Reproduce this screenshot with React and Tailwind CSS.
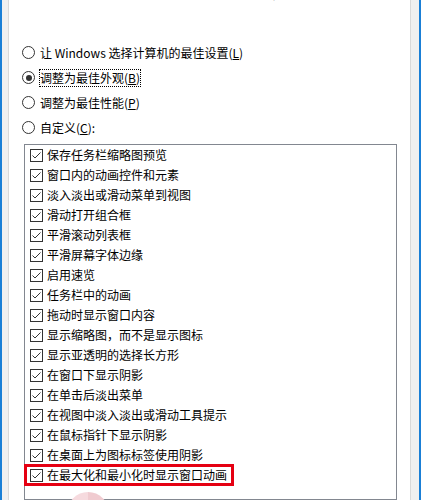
import React from 'react';

const radios = [
  { label: '让 Windows 选择计算机的最佳设置(', key: 'L', checked: false },
  { label: '调整为最佳外观(', key: 'B', checked: true },
  { label: '调整为最佳性能(', key: 'P', checked: false },
  { label: '自定义(', key: 'C', checked: false, colon: true },
];

const effects = [
  '保存任务栏缩略图预览',
  '窗口内的动画控件和元素',
  '淡入淡出或滑动菜单到视图',
  '滑动打开组合框',
  '平滑滚动列表框',
  '平滑屏幕字体边缘',
  '启用速览',
  '任务栏中的动画',
  '拖动时显示窗口内容',
  '显示缩略图，而不是显示图标',
  '显示亚透明的选择长方形',
  '在窗口下显示阴影',
  '在单击后淡出菜单',
  '在视图中淡入淡出或滑动工具提示',
  '在鼠标指针下显示阴影',
  '在桌面上为图标标签使用阴影',
  '在最大化和最小化时显示窗口动画',
];

const Radio = ({ checked }) => (
  <div className="w-[13px] h-[13px] rounded-full border border-[#333] bg-white flex items-center justify-center flex-shrink-0">
    {checked && <div className="w-[6px] h-[6px] rounded-full bg-[#333]" />}
  </div>
);

const CheckBox = () => (
  <div className="w-[13px] h-[13px] border border-[#333] bg-white flex-shrink-0">
    <svg width="11" height="11" viewBox="0 0 11 11" className="block">
      <polyline points="1.5,5.5 4,8 9.5,2.5" fill="none" stroke="#333" strokeWidth="1" />
    </svg>
  </div>
);

export default function App() {
  return (
    <div className="w-[421px] h-[500px] overflow-hidden flex bg-[#f0f0f0] border-x-2 border-[#1a7fd6] font-['Noto_Sans_CJK_SC',sans-serif] text-[12px] text-black relative">
      <div className="ml-[6px] mr-[8px] flex-1 bg-white border-x border-[#d9d9d9] px-[13px] flex flex-col">
        {/* description line, scrolled mostly out of view */}
        <div className="mt-[-14px] ml-[1px] h-[16px] leading-[16px] whitespace-nowrap">
          选择你想在此计算机上使用的 Windows 外观和性能设置。
        </div>

        <div className="mt-[38px] flex flex-col">
          {radios.map((r) => (
            <div key={r.key} className="h-[25px] flex items-center">
              <Radio checked={r.checked} />
              <span
                className={`ml-[4px] leading-[16px] border ${r.checked ? 'border-dotted border-black' : 'border-transparent'}`}
              >
                {r.label}
                <span className="underline">{r.key}</span>){r.colon ? ':' : ''}
              </span>
            </div>
          ))}
        </div>

        <div className="mt-[4px] ml-[2px] flex-1 border border-[#828790] flex flex-col">
          {effects.map((e, i) => (
            <div key={e} className="h-[20px] flex items-center pl-[5px] relative flex-shrink-0">
              <CheckBox />
              <span className="ml-[4px] leading-[16px] whitespace-nowrap">{e}</span>
              {i === effects.length - 1 && (
                <div className="absolute left-[-1px] top-[-1px] w-[210px] h-[22px] border-[3px] border-[#e50012]" />
              )}
            </div>
          ))}
        </div>
      </div>

      {/* faint watermark at the bottom */}
      <div className="absolute left-[65px] top-[492px] w-[42px] h-[42px] rounded-full bg-[linear-gradient(90deg,#f6dade_50%,#f0cbd0_50%)]" />
    </div>
  );
}
